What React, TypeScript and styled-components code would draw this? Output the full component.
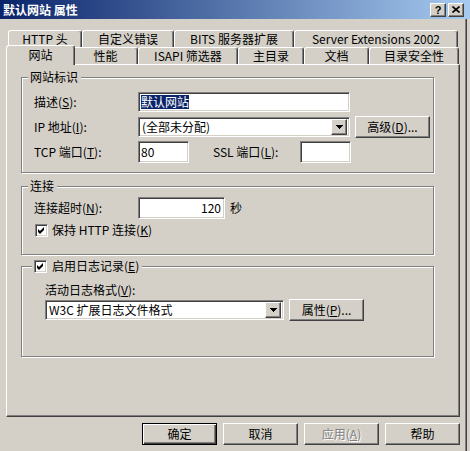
import React from 'react';
import styled, { createGlobalStyle, css } from 'styled-components';

const face = '#d4d0c8';

const GlobalStyle = createGlobalStyle`
  html, body {
    margin: 0;
    padding: 0;
    background: ${face};
  }
  body {
    font-family: "Noto Sans CJK SC", "Liberation Sans", sans-serif;
    font-size: 12px;
    line-height: 14px;
    color: #000;
  }
  * {
    box-sizing: border-box;
  }
`;

const raised = css`
  border: 1px solid;
  border-color: #fff #404040 #404040 #fff;
  box-shadow: inset -1px -1px 0 #808080;
  background: ${face};
`;

const sunken = css`
  border: 1px solid;
  border-color: #808080 #fff #fff #808080;
  box-shadow: inset 1px 1px 0 #404040, inset -1px -1px 0 ${face};
`;

const Window = styled.div`
  width: 470px;
  height: 451px;
  background: ${face};
  display: flex;
  flex-direction: column;
  overflow: hidden;
`;

const TitleBar = styled.div`
  height: 19px;
  flex: none;
  display: flex;
  align-items: center;
  padding: 0 6px 0 3px;
  background: linear-gradient(to right, #0a246a, #a6caf0);
  color: #fff;
  font-weight: bold;
`;

const TitleText = styled.div`
  flex: 1;
  white-space: nowrap;
`;

const TitleButton = styled.div`
  ${raised};
  width: 16px;
  height: 14px;
  margin-left: 2px;
  display: flex;
  align-items: center;
  justify-content: center;
  color: #000;
  font-family: "Liberation Sans", sans-serif;
  font-weight: bold;
  font-size: 11px;
  line-height: 12px;
`;

const Body = styled.div`
  flex: 1;
  margin-right: 3px;
  padding: 11px 6px 0 6px;
  border-right: 1px solid #404040;
  box-shadow: inset -1px 0 0 #808080;
  display: flex;
  flex-direction: column;
`;

const TabRow = styled.div<{ $front?: boolean }>`
  display: flex;
  align-items: flex-end;
  padding-left: 2px;
  ${(p) => p.$front && css`margin-top: -2px;`}
`;

const Tab = styled.div<{ $w: number; $active?: boolean }>`
  width: ${(p) => p.$w}px;
  height: 17px;
  flex: none;
  display: flex;
  align-items: center;
  justify-content: center;
  border: 1px solid;
  border-bottom: none;
  border-color: #fff #404040 transparent #fff;
  border-radius: 3px 3px 0 0;
  box-shadow: inset -1px 0 0 #808080;
  background: ${face};
  white-space: nowrap;
  line-height: 12px;
  ${(p) =>
    p.$active &&
    css`
      width: ${p.$w + 4}px;
      height: 20px;
      margin: 0 -2px -1px;
      padding-top: 1px;
      padding-bottom: 2px;
      position: relative;
      z-index: 1;
    `}
`;

const Panel = styled.div`
  height: 353px;
  border: 1px solid;
  border-color: #fff #404040 #404040 #fff;
  box-shadow: inset -1px -1px 0 #808080;
  padding: 12px 0 0 14px;
  display: flex;
  flex-direction: column;
`;

const Group = styled.div<{ $h: number; $mt?: number; $pad: string }>`
  position: relative;
  width: 413px;
  height: ${(p) => p.$h}px;
  margin-top: ${(p) => p.$mt ?? 0}px;
  padding: ${(p) => p.$pad};
  border: 1px solid #808080;
  box-shadow: 1px 1px 0 #fff, inset 1px 1px 0 #fff;
  display: flex;
  flex-direction: column;
`;

const Caption = styled.div<{ $left: number }>`
  position: absolute;
  top: -8px;
  left: ${(p) => p.$left}px;
  height: 14px;
  display: flex;
  align-items: center;
  gap: 5px;
  padding: 0 3px 0 2px;
  background: ${face};
  white-space: nowrap;
`;

const Row = styled.div<{ $h: number; $mt?: number }>`
  display: flex;
  align-items: center;
  height: ${(p) => p.$h}px;
  margin-top: ${(p) => p.$mt ?? 0}px;
`;

const Label = styled.span<{ $w?: number; $ml?: number }>`
  flex: none;
  width: ${(p) => (p.$w ? `${p.$w}px` : 'auto')};
  margin-left: ${(p) => p.$ml ?? 0}px;
  white-space: nowrap;
`;

const Key = styled.span`
  text-decoration: underline;
`;

const TextBox = styled.div<{ $w: number; $h: number; $right?: boolean }>`
  ${sunken};
  width: ${(p) => p.$w}px;
  height: ${(p) => p.$h}px;
  flex: none;
  background: #fff;
  padding: 0 3px 0 2px;
  display: flex;
  align-items: center;
  justify-content: ${(p) => (p.$right ? 'flex-end' : 'flex-start')};
  white-space: nowrap;
`;

const Selected = styled.span`
  background: #0a246a;
  color: #fff;
`;

const Combo = styled.div<{ $w: number }>`
  ${sunken};
  width: ${(p) => p.$w}px;
  height: 20px;
  flex: none;
  background: #fff;
  padding: 2px 2px 2px 3px;
  display: flex;
  align-items: center;
  white-space: nowrap;
`;

const ComboText = styled.span`
  flex: 1;
`;

const ComboArrow = styled.div`
  ${raised};
  width: 16px;
  height: 16px;
  flex: none;
  display: flex;
  align-items: center;
  justify-content: center;
`;

const Button = styled.div<{ $w?: number; $ml?: number; $default?: boolean; $disabled?: boolean }>`
  ${raised};
  width: ${(p) => p.$w ?? 75}px;
  height: 22px;
  flex: none;
  margin-left: ${(p) => p.$ml ?? 0}px;
  display: flex;
  align-items: center;
  justify-content: center;
  white-space: nowrap;
  ${(p) =>
    p.$default &&
    css`
      border-color: #000;
      box-shadow: inset 1px 1px 0 #fff, inset -1px -1px 0 #404040, inset -2px -2px 0 #808080;
    `}
  ${(p) =>
    p.$disabled &&
    css`
      color: #808080;
      text-shadow: 1px 1px 0 #fff;
    `}
`;

const CheckBox = styled.div<{ $ml?: number }>`
  ${sunken};
  width: 13px;
  height: 13px;
  flex: none;
  margin-left: ${(p) => p.$ml ?? 0}px;
  background: #fff;
  display: flex;
  align-items: center;
  justify-content: center;
`;

const CheckRow = styled.div<{ $mt?: number }>`
  display: flex;
  align-items: center;
  gap: 4px;
  height: 14px;
  margin-top: ${(p) => p.$mt ?? 0}px;
`;

const ButtonRow = styled.div`
  display: flex;
  gap: 6px;
  margin-top: 6px;
  padding-left: 136px;
`;

function Arrow() {
  return (
    <svg width="7" height="4" viewBox="0 0 7 4" shapeRendering="crispEdges">
      <path d="M0 0H7L3.5 4Z" fill="#000" />
    </svg>
  );
}

function Check() {
  return (
    <svg width="7" height="7" viewBox="0 0 7 7">
      <path d="M0 2L2 4L6 0V3L2 7L0 5Z" fill="#000" />
    </svg>
  );
}

function CloseGlyph() {
  return (
    <svg width="8" height="7" viewBox="0 0 8 7">
      <path d="M0.5 0.5L7.5 6.5M7.5 0.5L0.5 6.5" stroke="#000" strokeWidth="1.6" />
    </svg>
  );
}

const backTabs = [
  { text: 'HTTP 头', w: 74 },
  { text: '自定义错误', w: 92 },
  { text: 'BITS 服务器扩展', w: 120 },
  { text: 'Server Extensions 2002', w: 164 },
];

const frontTabs = [
  { text: '网站', w: 65, active: true },
  { text: '性能', w: 65 },
  { text: 'ISAPI 筛选器', w: 100 },
  { text: '主目录', w: 66 },
  { text: '文档', w: 65 },
  { text: '目录安全性', w: 90 },
];

export default function App() {
  return (
    <Window>
      <GlobalStyle />
      <TitleBar>
        <TitleText>默认网站 属性</TitleText>
        <TitleButton>?</TitleButton>
        <TitleButton>
          <CloseGlyph />
        </TitleButton>
      </TitleBar>
      <Body>
        <TabRow>
          {backTabs.map((t) => (
            <Tab key={t.text} $w={t.w}>
              {t.text}
            </Tab>
          ))}
        </TabRow>
        <TabRow $front>
          {frontTabs.map((t) => (
            <Tab key={t.text} $w={t.w} $active={t.active}>
              {t.text}
            </Tab>
          ))}
        </TabRow>
        <Panel>
          <Group $h={96} $pad="14px 0 0 12px">
            <Caption $left={6}>网站标识</Caption>
            <Row $h={20}>
              <Label $w={104}>
                描述(<Key>S</Key>):
              </Label>
              <TextBox $w={212} $h={20}>
                <Selected>默认网站</Selected>
              </TextBox>
            </Row>
            <Row $h={22} $mt={4}>
              <Label $w={104}>
                IP 地址(<Key>I</Key>):
              </Label>
              <Combo $w={212}>
                <ComboText>(全部未分配)</ComboText>
                <ComboArrow>
                  <Arrow />
                </ComboArrow>
              </Combo>
              <Button $ml={5}>
                高级(<Key>D</Key>)...
              </Button>
            </Row>
            <Row $h={22} $mt={3}>
              <Label $w={104}>
                TCP 端口(<Key>T</Key>):
              </Label>
              <TextBox $w={51} $h={22}>
                80
              </TextBox>
              <Label $w={87} $ml={24}>
                SSL 端口(<Key>L</Key>):
              </Label>
              <TextBox $w={51} $h={22} />
            </Row>
          </Group>

          <Group $h={69} $mt={13} $pad="10px 0 0 12px">
            <Caption $left={6}>连接</Caption>
            <Row $h={22}>
              <Label $w={104}>
                连接超时(<Key>N</Key>):
              </Label>
              <TextBox $w={87} $h={22} $right>
                120
              </TextBox>
              <Label $ml={5}>秒</Label>
            </Row>
            <CheckRow $mt={4}>
              <CheckBox $ml={1}>
                <Check />
              </CheckBox>
              <Label>
                保持 HTTP 连接(<Key>K</Key>)
              </Label>
            </CheckRow>
          </Group>

          <Group $h={91} $mt={11} $pad="16px 0 0 23px">
            <Caption $left={10}>
              <CheckBox>
                <Check />
              </CheckBox>
              <Label>
                启用日志记录(<Key>E</Key>)
              </Label>
            </Caption>
            <Label>
              活动日志格式(<Key>V</Key>):
            </Label>
            <Row $h={22} $mt={2}>
              <Combo $w={239}>
                <ComboText>W3C 扩展日志文件格式</ComboText>
                <ComboArrow>
                  <Arrow />
                </ComboArrow>
              </Combo>
              <Button $ml={5}>
                属性(<Key>P</Key>)...
              </Button>
            </Row>
          </Group>
        </Panel>
        <ButtonRow>
          <Button $default>确定</Button>
          <Button>取消</Button>
          <Button $disabled>
            应用(<Key>A</Key>)
          </Button>
          <Button>帮助</Button>
        </ButtonRow>
      </Body>
    </Window>
  );
}
